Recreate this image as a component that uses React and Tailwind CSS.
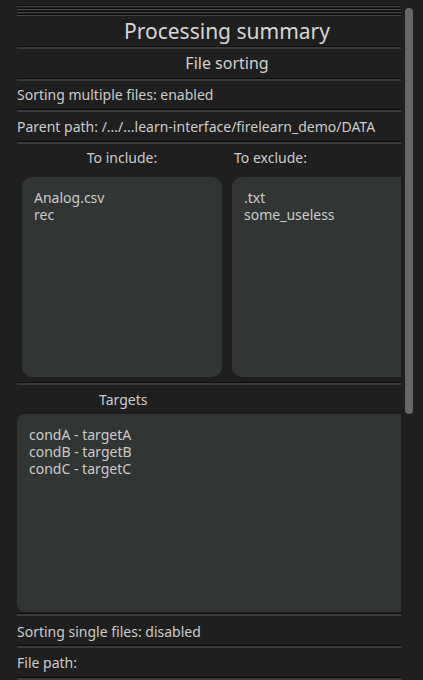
const TEXT = 'text-[#cbcbcb]';

function Sep() {
  return (
    <div className="flex flex-col">
      <div className="h-px bg-[#0e0e0e]" />
      <div className="h-[2px] bg-[#3c3c3c]" />
    </div>
  );
}

function Line({ children }) {
  return <div className={`h-[29px] flex items-center text-[14px] ${TEXT}`}>{children}</div>;
}

function Box({ lines, className }) {
  return (
    <div className={`h-[200px] bg-[#313534] px-[12px] pt-[12px] text-[14px] leading-[17px] ${TEXT} ${className}`}>
      {lines.map((l) => (
        <div key={l}>{l}</div>
      ))}
    </div>
  );
}

export default function App() {
  return (
    <div
      className="h-[680px] w-[423px] bg-[#1f1f1f] overflow-hidden flex"
      style={{ fontFamily: '"Noto Sans", "DejaVu Sans", sans-serif' }}
    >
      <div className="ml-[17px] w-[384px] overflow-hidden flex flex-col shrink-0">
        <div className="pt-[5px] flex flex-col">
          {[0, 1, 2, 3].map((i) => (
            <div key={i} className="flex flex-col">
              <div className="h-px bg-[#0e0e0e]" />
              <div className="h-px bg-[#444444]" />
              <div className="h-px" />
            </div>
          ))}
        </div>
        <div className="h-[29px] flex items-center justify-center pl-[36px] text-[21px] text-[#d6d6d6]">
          Processing summary
        </div>
        <Sep />
        <div className="h-[29px] flex items-center justify-center pl-[36px] text-[16px] text-[#d0d0d0]">
          File sorting
        </div>
        <Sep />
        <Line>Sorting multiple files: enabled</Line>
        <Sep />
        <Line>Parent path: /.../...learn-interface/firelearn_demo/DATA</Line>
        <Sep />
        <div className="w-[430px] flex gap-[10px] pl-[5px]">
          <div className="w-[200px] flex flex-col">
            <div className={`h-[33px] pt-[5px] leading-[17px] text-center text-[14px] ${TEXT}`}>To include:</div>
            <Box lines={['Analog.csv', 'rec']} className="rounded-[10px]" />
          </div>
          <div className="w-[200px] flex flex-col">
            <div className={`h-[33px] pt-[5px] pl-[2px] leading-[17px] text-[14px] ${TEXT}`}>To exclude:</div>
            <Box lines={['.txt', 'some_useless']} className="rounded-[10px]" />
          </div>
        </div>
        <div className="h-[5px]" />
        <Sep />
        <div className={`h-[30px] flex items-center pl-[82px] text-[14px] ${TEXT}`}>Targets</div>
        <Box lines={['condA - targetA', 'condB - targetB', 'condC - targetC']} className="rounded-l-[8px]" />
        <div className="h-px" />
        <Sep />
        <div className="h-px" />
        <Line>Sorting single files: disabled</Line>
        <Sep />
        <Line>File path:</Line>
        <Sep />
      </div>
      <div className="ml-[4px] mt-[8px] w-[8px] h-[406px] rounded-full bg-[#676767]" />
    </div>
  );
}
